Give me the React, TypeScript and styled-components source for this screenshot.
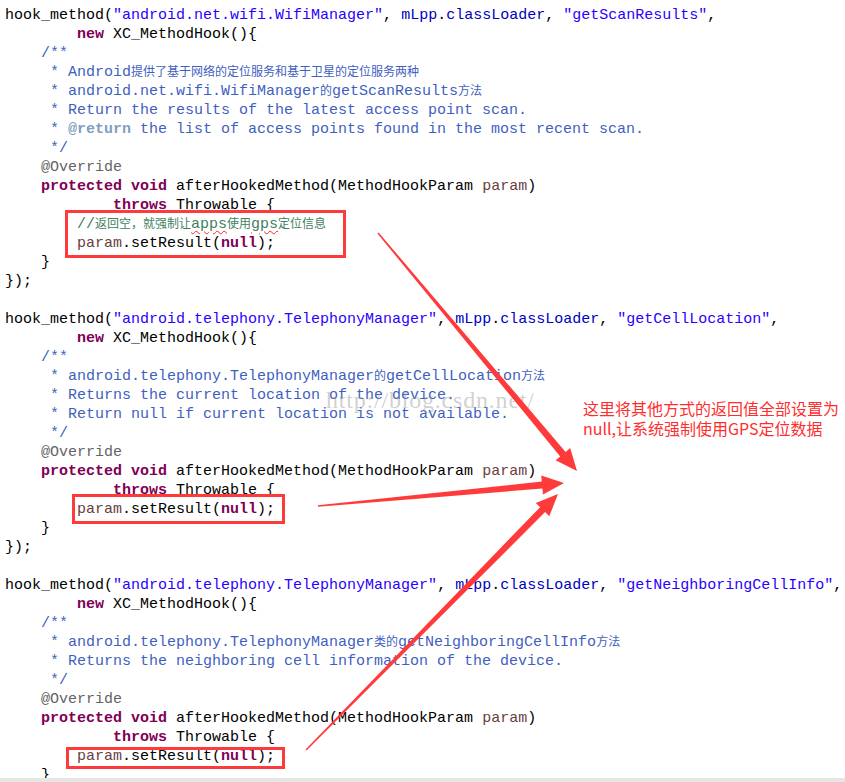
import React from "react";
import styled, { createGlobalStyle } from "styled-components";

const GlobalStyle = createGlobalStyle`
  html, body {
    margin: 0;
    padding: 0;
    background: #ffffff;
  }
`;

const Page = styled.div`
  position: relative;
  width: 845px;
  height: 782px;
  overflow: hidden;
  background: #ffffff;

  display: flex;
  flex-direction: column;
`;

const Code = styled.div`
  flex: 1;
  overflow: hidden;
  padding: 6px 0 0 5px;

  font-family: "Liberation Mono", "DejaVu Sans Mono", monospace;
  font-size: 15px;
  color: #000000;
`;

const Line = styled.div`
  height: 19px;
  line-height: 19px;
  white-space: pre;
`;

const Kw = styled.span`
  color: #7f0055;
  font-weight: bold;
`;

const Str = styled.span`
  color: #2a00ff;
`;

const Fld = styled.span`
  color: #0000c0;
`;

const Prm = styled.span`
  color: #6a3e3e;
`;

const Doc = styled.span`
  color: #3f5fbf;
`;

const DocTag = styled.span`
  color: #7f9fbf;
  font-weight: bold;
`;

const Ann = styled.span`
  color: #646464;
`;

const Cmt = styled.span`
  color: #3f7f5f;
`;

const Cjk = styled.span`
  font-family: "Noto Sans CJK SC", sans-serif;
  font-size: 12px;
  line-height: 12px;
`;

const Squiggle = styled.span`
  text-decoration: underline wavy #ff2020;
  text-decoration-thickness: 1px;
  text-underline-offset: 2px;
`;

const BottomBar = styled.div`
  height: 4px;
  flex-shrink: 0;
  background: #e6e6e6;
`;

const MarkBox = styled.div<{ $x: number; $y: number; $w: number; $h: number }>`
  position: absolute;
  left: ${({ $x }) => $x}px;
  top: ${({ $y }) => $y}px;
  width: ${({ $w }) => $w}px;
  height: ${({ $h }) => $h}px;
  box-sizing: border-box;
  border: 3px solid #ff3a3a;
`;

const Watermark = styled.div`
  position: absolute;
  left: 326px;
  top: 388px;
  font-family: "Liberation Serif", serif;
  font-size: 24px;
  line-height: 24px;
  letter-spacing: 0.8px;
  color: rgba(150, 150, 150, 0.45);
  white-space: nowrap;
`;

const Note = styled.div`
  position: absolute;
  left: 583px;
  top: 398px;
  font-family: "Noto Sans CJK SC", sans-serif;
  font-size: 16px;
  line-height: 20px;
  color: #ff2e2e;
  white-space: nowrap;
`;

const Overlay = styled.svg`
  position: absolute;
  left: 0;
  top: 0;
  pointer-events: none;
`;

type Pt = [number, number];

const arrowPoints = (from: Pt, tip: Pt, w0: number, w1: number, headLen: number, headW: number) => {
  const dx = tip[0] - from[0];
  const dy = tip[1] - from[1];
  const len = Math.hypot(dx, dy);
  const ux = dx / len;
  const uy = dy / len;
  const nx = -uy;
  const ny = ux;
  const bx = tip[0] - ux * headLen;
  const by = tip[1] - uy * headLen;
  const pts: Pt[] = [
    [from[0] + (nx * w0) / 2, from[1] + (ny * w0) / 2],
    [bx + (nx * w1) / 2, by + (ny * w1) / 2],
    [bx + (nx * headW) / 2, by + (ny * headW) / 2],
    tip,
    [bx - (nx * headW) / 2, by - (ny * headW) / 2],
    [bx - (nx * w1) / 2, by - (ny * w1) / 2],
    [from[0] - (nx * w0) / 2, from[1] - (ny * w0) / 2],
  ];
  return pts.map((p) => `${p[0].toFixed(1)},${p[1].toFixed(1)}`).join(" ");
};

const arrows: { from: Pt; tip: Pt }[] = [
  { from: [378, 233], tip: [577, 471] },
  { from: [318, 506], tip: [564, 483] },
  { from: [306, 750], tip: [558, 494] },
];

const HookHeader: React.FC<{ cls: string; method: string }> = ({ cls, method }) => (
  <>
    <Line>
      hook_method(<Str>"{cls}"</Str>, <Fld>mLpp</Fld>.<Fld>classLoader</Fld>, <Str>"{method}"</Str>,
    </Line>
    <Line>
      {"        "}
      <Kw>new</Kw> XC_MethodHook(){"{"}
    </Line>
  </>
);

const HookBody: React.FC = () => (
  <>
    <Line>
      {"    "}
      <Ann>@Override</Ann>
    </Line>
    <Line>
      {"    "}
      <Kw>protected</Kw> <Kw>void</Kw> afterHookedMethod(MethodHookParam <Prm>param</Prm>)
    </Line>
    <Line>
      {"            "}
      <Kw>throws</Kw> Throwable {"{"}
    </Line>
  </>
);

const SetNull: React.FC = () => (
  <Line>
    {"        "}
    <Prm>param</Prm>.setResult(<Kw>null</Kw>);
  </Line>
);

const App: React.FC = () => {
  return (
    <>
      <GlobalStyle />
      <Page>
        <Code>
          <HookHeader cls="android.net.wifi.WifiManager" method="getScanResults" />
          <Line>
            <Doc>{"    /**"}</Doc>
          </Line>
          <Line>
            <Doc>
              {"     * Android"}
              <Cjk>提供了基于网络的定位服务和基于卫星的定位服务两种</Cjk>
            </Doc>
          </Line>
          <Line>
            <Doc>
              {"     * android.net.wifi.WifiManager"}
              <Cjk>的</Cjk>getScanResults<Cjk>方法</Cjk>
            </Doc>
          </Line>
          <Line>
            <Doc>{"     * Return the results of the latest access point scan."}</Doc>
          </Line>
          <Line>
            <Doc>
              {"     * "}
              <DocTag>@return</DocTag> the list of access points found in the most recent scan.
            </Doc>
          </Line>
          <Line>
            <Doc>{"     */"}</Doc>
          </Line>
          <HookBody />
          <Line>
            {"        "}
            <Cmt>
              //<Cjk>返回空，就强制让</Cjk>
              <Squiggle>apps</Squiggle>
              <Cjk>使用</Cjk>
              <Squiggle>gps</Squiggle>
              <Cjk>定位信息</Cjk>
            </Cmt>
          </Line>
          <SetNull />
          <Line>{"    }"}</Line>
          <Line>{"});"}</Line>
          <Line> </Line>

          <HookHeader cls="android.telephony.TelephonyManager" method="getCellLocation" />
          <Line>
            <Doc>{"    /**"}</Doc>
          </Line>
          <Line>
            <Doc>
              {"     * android.telephony.TelephonyManager"}
              <Cjk>的</Cjk>getCellLocation<Cjk>方法</Cjk>
            </Doc>
          </Line>
          <Line>
            <Doc>{"     * Returns the current location of the device."}</Doc>
          </Line>
          <Line>
            <Doc>{"     * Return null if current location is not available."}</Doc>
          </Line>
          <Line>
            <Doc>{"     */"}</Doc>
          </Line>
          <HookBody />
          <SetNull />
          <Line>{"    }"}</Line>
          <Line>{"});"}</Line>
          <Line> </Line>

          <HookHeader cls="android.telephony.TelephonyManager" method="getNeighboringCellInfo" />
          <Line>
            <Doc>{"    /**"}</Doc>
          </Line>
          <Line>
            <Doc>
              {"     * android.telephony.TelephonyManager"}
              <Cjk>类的</Cjk>getNeighboringCellInfo<Cjk>方法</Cjk>
            </Doc>
          </Line>
          <Line>
            <Doc>{"     * Returns the neighboring cell information of the device."}</Doc>
          </Line>
          <Line>
            <Doc>{"     */"}</Doc>
          </Line>
          <HookBody />
          <SetNull />
          <Line>{"    }"}</Line>
        </Code>
        <BottomBar />

        <Watermark>http://blog.csdn.net/</Watermark>

        <MarkBox $x={65} $y={210} $w={281} $h={48} />
        <MarkBox $x={72} $y={494} $w={213} $h={30} />
        <MarkBox $x={66} $y={747} $w={219} $h={22} />

        <Overlay width="845" height="782" viewBox="0 0 845 782">
          {arrows.map((a, i) => (
            <polygon key={i} points={arrowPoints(a.from, a.tip, 1.5, 7, 22, 19)} fill="#ff3a3a" />
          ))}
        </Overlay>

        <Note>
          这里将其他方式的返回值全部设置为
          <br />
          null,让系统强制使用GPS定位数据
        </Note>
      </Page>
    </>
  );
};

export default App;
